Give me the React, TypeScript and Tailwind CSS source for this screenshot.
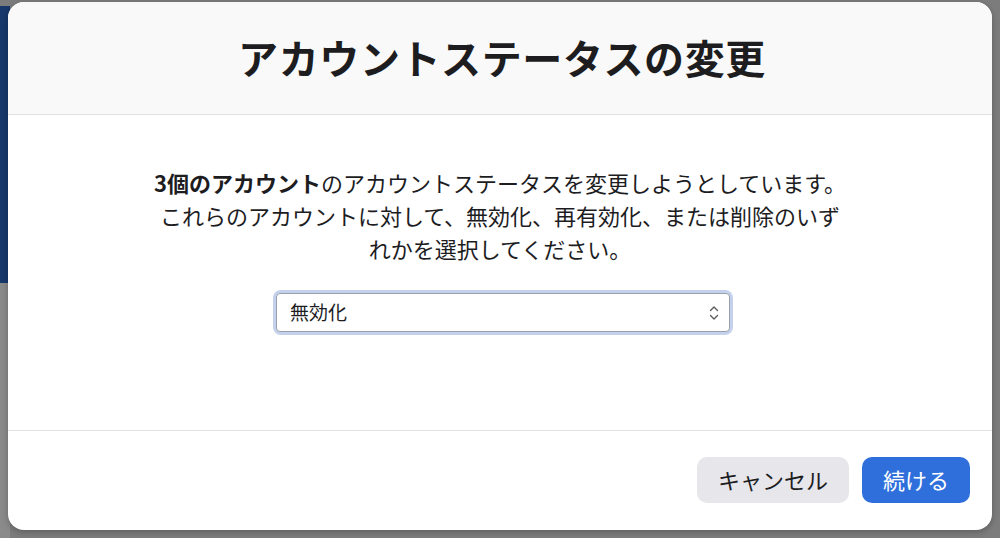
const jp = '"Noto Sans CJK JP", "Noto Sans", sans-serif';

function UpDown() {
  return (
    <svg width="10" height="16" viewBox="0 0 10 16" fill="none" stroke="#5a5a5f" strokeWidth="1.4" strokeLinecap="round" strokeLinejoin="round">
      <path d="M1.5 5.5 L5 2 L8.5 5.5" />
      <path d="M1.5 10.5 L5 14 L8.5 10.5" />
    </svg>
  );
}

export default function App() {
  return (
    <div className="relative w-[1000px] h-[538px] overflow-hidden bg-[#7c7c7c]" style={{ fontFamily: jp }}>
      {/* page behind the dialog */}
      <div className="absolute left-0 top-[6px] w-[10px] h-[277px] bg-[#17386b]" />
      <div className="absolute left-0 top-[283px] w-[10px] h-[255px] bg-[#8a8a8a]" />

      <div className="relative flex pl-[8px] pt-[2px]">
        <div className="flex flex-col w-[984px] h-[528px] rounded-[16px] bg-white overflow-hidden shadow-[0_2px_6px_rgba(0,0,0,0.25)]">
          <header className="flex items-center justify-center h-[113px] shrink-0 bg-[#f9f9f9] border-b border-[#e2e2e4]">
            <h1 className="text-[40px] font-bold text-[#1d1d1f] tracking-[0.6px] pb-[2px] pl-[4px]">アカウントステータスの変更</h1>
          </header>

          <section className="flex flex-col items-center flex-1 pt-[51px]">
            <p className="w-[700px] text-center text-[22px] leading-[33px] text-[#1d1d1f]">
              <span className="font-bold">3個のアカウント</span>のアカウントステータスを変更しようとしています。これらのアカウントに対して、無効化、再有効化、または削除のいずれかを選択してください。
            </p>
            <div className="mt-[28px] ml-[6px] rounded-[5px] ring-[3px] ring-[#c3d1ec]">
              <div className="flex items-center justify-between w-[454px] h-[39px] pl-[13px] pr-[10px] bg-white border border-[#9aa0aa] rounded-[4px]">
                <span className="text-[19px] text-[#1d1d1f]">無効化</span>
                <UpDown />
              </div>
            </div>
          </section>

          <footer className="flex items-center justify-end gap-[13px] h-[100px] shrink-0 border-t border-[#e2e2e4] pr-[22px] pb-[2px]">
            <button className="h-[46px] px-[21px] rounded-[10px] bg-[#e6e6eb] text-[22px] text-[#1d1d1f]">キャンセル</button>
            <button className="h-[46px] px-[21px] rounded-[10px] bg-[#2f6fdc] text-[22px] text-white">続ける</button>
          </footer>
        </div>
      </div>
    </div>
  );
}
